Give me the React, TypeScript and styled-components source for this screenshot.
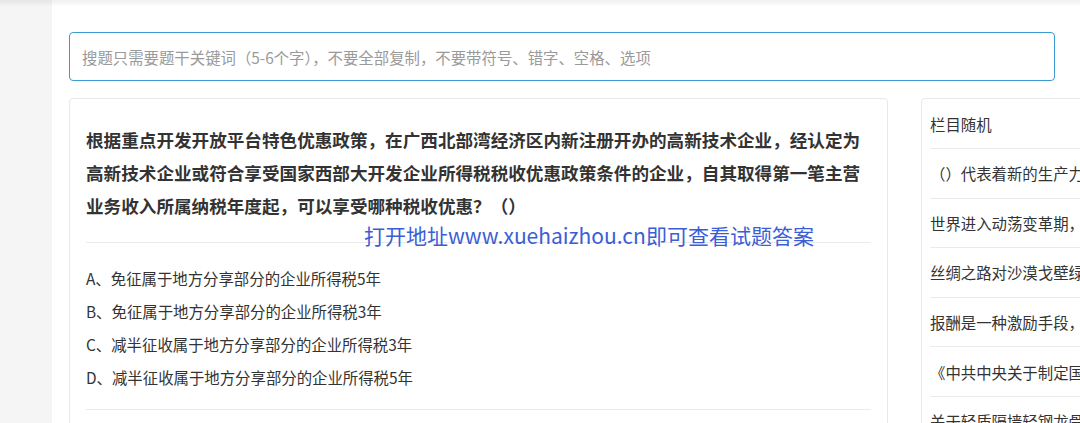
import styled, { createGlobalStyle } from 'styled-components';

const GlobalStyle = createGlobalStyle`
  html, body {
    margin: 0;
    padding: 0;
    overflow: hidden;
    background: #ffffff;
  }
  body {
    font-family: 'Noto Sans CJK SC', 'Microsoft YaHei', sans-serif;
    color: #333333;
  }
`;

const TopShade = styled.div`
  position: fixed;
  top: 0;
  left: 0;
  right: 0;
  height: 7px;
  background: linear-gradient(rgba(0, 0, 0, 0.06), rgba(0, 0, 0, 0));
  pointer-events: none;
`;

const Page = styled.div`
  display: flex;
  min-height: 423px;
  width: 1400px;
`;

const SideStrip = styled.div`
  width: 52px;
  flex: none;
  background: #f5f5f5;
`;

const Main = styled.main`
  flex: 1;
  padding: 32px 0 0 17px;
`;

const SearchInput = styled.input`
  display: block;
  box-sizing: border-box;
  width: 986px;
  height: 49px;
  padding: 0 12px;
  border: 1px solid #3d9bd4;
  border-radius: 4px;
  outline: none;
  font-family: 'Noto Sans CJK SC', sans-serif;
  font-size: 15.4px;
  color: #333;

  &::placeholder {
    color: #9a9a9a;
  }
`;

const Columns = styled.div`
  display: flex;
  align-items: flex-start;
  gap: 33px;
  margin-top: 17px;
`;

const Card = styled.section<{ $width: number }>`
  position: relative;
  box-sizing: border-box;
  width: ${({ $width }) => $width}px;
  flex: none;
  border: 1px solid #e8e8e8;
  border-radius: 4px;
  background: #fff;
`;

const QuestionBody = styled.div`
  padding: 24px 16px 40px;
`;

const Title = styled.h1`
  margin: 0 0 20px;
  font-size: 17.6px;
  font-weight: 700;
  line-height: 33px;
  color: #333;
`;

const Divider = styled.div`
  height: 1px;
  background: #ebebeb;
`;

const Options = styled.ul`
  list-style: none;
  margin: 0;
  padding: 19px 0 15px;
`;

const Option = styled.li`
  font-size: 15.4px;
  line-height: 33px;
  color: #333;
`;

const Watermark = styled.div`
  position: absolute;
  left: 294px;
  top: 126px;
  font-family: 'Noto Sans CJK SC', sans-serif;
  font-size: 21px;
  line-height: 21px;
  color: #3b5ed6;
  white-space: nowrap;
  pointer-events: none;
`;

const SideList = styled.ul`
  list-style: none;
  margin: 0;
  padding: 0 8px;
  overflow: hidden;
`;

const SideRow = styled.li<{ $head?: boolean }>`
  display: flex;
  align-items: center;
  height: ${({ $head }) => ($head ? 49 : 48.6)}px;
  border-bottom: 1px solid #ebebeb;
  font-size: 15.4px;
  color: #333;
  white-space: nowrap;
  overflow: hidden;
`;

const options = [
  'A、免征属于地方分享部分的企业所得税5年',
  'B、免征属于地方分享部分的企业所得税3年',
  'C、减半征收属于地方分享部分的企业所得税3年',
  'D、减半征收属于地方分享部分的企业所得税5年',
];

const randomItems = [
  '（）代表着新的生产力方向',
  '世界进入动荡变革期，不稳定性',
  '丝绸之路对沙漠戈壁绿洲的影响',
  '报酬是一种激励手段，可以',
  '《中共中央关于制定国民经济',
  '关于轻质隔墙轻钢龙骨的说法',
];

const App = () => {
  return (
    <>
      <GlobalStyle />
      <Page>
        <SideStrip />
        <Main>
          <SearchInput placeholder="搜题只需要题干关键词（5-6个字），不要全部复制，不要带符号、错字、空格、选项" />
          <Columns>
            <Card $width={819}>
              <QuestionBody>
                <Title>
                  根据重点开发开放平台特色优惠政策，在广西北部湾经济区内新注册开办的高新技术企业，经认定为高新技术企业或符合享受国家西部大开发企业所得税税收优惠政策条件的企业，自其取得第一笔主营业务收入所属纳税年度起，可以享受哪种税收优惠？（）
                </Title>
                <Divider />
                <Options>
                  {options.map((o) => (
                    <Option key={o}>{o}</Option>
                  ))}
                </Options>
                <Divider />
              </QuestionBody>
              <Watermark>打开地址www.xuehaizhou.cn即可查看试题答案</Watermark>
            </Card>
            <Card $width={280}>
              <SideList>
                <SideRow $head>栏目随机</SideRow>
                {randomItems.map((t) => (
                  <SideRow key={t}>{t}</SideRow>
                ))}
              </SideList>
            </Card>
          </Columns>
        </Main>
      </Page>
      <TopShade />
    </>
  );
};

export default App;
